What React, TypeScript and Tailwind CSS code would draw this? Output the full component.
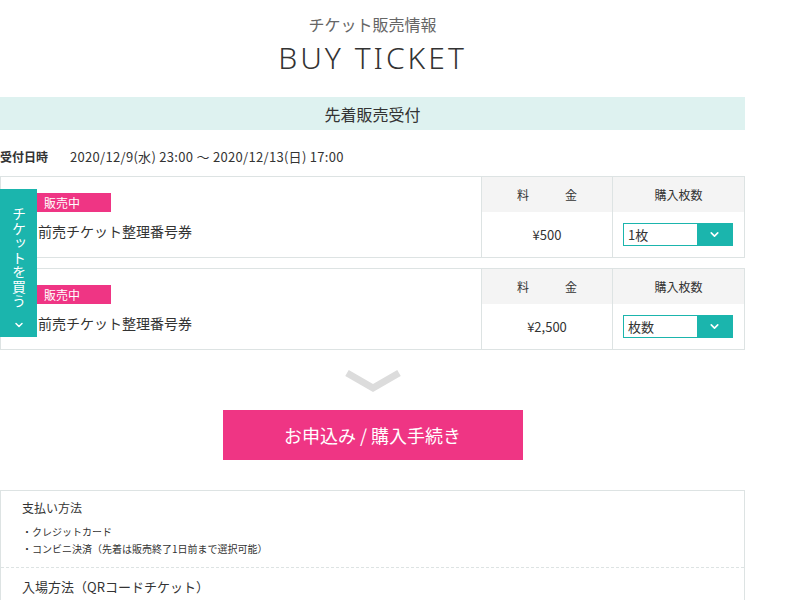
import { ChevronDown } from "lucide-react"

const jp = { fontFamily: '"Noto Sans CJK JP", "Noto Sans", sans-serif' }

const tickets = [
  { name: "前売チケット整理番号券", price: "¥500", qty: "1枚" },
  { name: "前売チケット整理番号券", price: "¥2,500", qty: "枚数" },
]

function TicketRow({ name, price, qty }: { name: string; price: string; qty: string }) {
  return (
    <div className="flex border border-[#dde3e3] h-[82px]">
      <div className="w-[481px] border-r border-[#dde3e3] pl-[23px] pt-[16px]">
        <div className="w-[87px] h-[19px] bg-[#ef3584] text-white text-[12px] leading-[19px] pl-[20px]">販売中</div>
        <div className="mt-[9px] text-[14px] leading-[20px] text-[#333]">・{name}</div>
      </div>
      <div className="w-[131px] border-r border-[#dde3e3] flex flex-col">
        <div className="h-[35px] bg-[#f4f4f4] flex items-center justify-center text-[12px] text-[#333]">
          料<span className="w-[36px]" />金
        </div>
        <div className="flex-1 flex items-center justify-center text-[13px] text-[#333]">{price}</div>
      </div>
      <div className="flex-1 flex flex-col">
        <div className="h-[35px] bg-[#f4f4f4] flex items-center justify-center text-[12px] text-[#333]">購入枚数</div>
        <div className="flex-1 flex items-center pl-[10px]">
          <div className="flex h-[23px] w-[110px] border border-[#1bb5ad]">
            <div className="flex-1 bg-white text-[13px] leading-[21px] pl-[4px] text-[#333]">{qty}</div>
            <div className="w-[35px] bg-[#1bb5ad] flex items-center justify-center">
              <ChevronDown className="w-[13px] h-[13px] text-white" strokeWidth={3} />
            </div>
          </div>
        </div>
      </div>
    </div>
  )
}

export default function App() {
  return (
    <div className="relative w-[800px] h-[600px] overflow-hidden bg-white" style={jp}>
      <div className="w-[745px]">
        <div className="pt-[14px] text-center text-[16px] leading-[20px] text-[#666]">チケット販売情報</div>
        <div className="mt-[4px] text-center text-[30px] leading-[40px] tracking-[3px] text-[#333] font-light" style={{ fontFamily: '"Noto Sans", sans-serif' }}>
          BUY TICKET
        </div>
        <div className="mt-[19px] h-[33px] bg-[#def2f0] flex items-center justify-center text-[16px] text-[#333]">先着販売受付</div>
        <div className="mt-[18px] flex items-center text-[12px] leading-[18px] text-[#333]">
          <span className="font-bold w-[70px]">受付日時</span>
          <span className="text-[13px] tracking-[0.3px]">2020/12/9(水) 23:00 ～ 2020/12/13(日) 17:00</span>
        </div>
        <div className="mt-[10px] flex flex-col gap-[10px]">
          {tickets.map((t, i) => (
            <TicketRow key={i} {...t} />
          ))}
        </div>
        <div className="mt-[19px] flex justify-center">
          <svg width="56" height="24" viewBox="0 0 56 24">
            <path d="M2 4 L28 19 L54 4" fill="none" stroke="#dcdcdc" strokeWidth="7" />
          </svg>
        </div>
        <div className="mt-[17px] flex justify-center">
          <button className="w-[300px] h-[50px] bg-[#ef3584] text-white text-[18px]">お申込み / 購入手続き</button>
        </div>
        <div className="mt-[30px] border border-[#dde3e3] text-[#333]">
          <div className="px-[21px] pt-[8px] pb-[10px]">
            <div className="text-[12px] leading-[18px]">支払い方法</div>
            <div className="mt-[6px] text-[10px] leading-[17px]">
              <div>・クレジットカード</div>
              <div>・コンビニ決済（先着は販売終了1日前まで選択可能）</div>
            </div>
          </div>
          <div className="border-t border-dashed border-[#dde3e3] px-[21px] pt-[10px] pb-[10px] text-[13px] leading-[18px]">入場方法（QRコードチケット）</div>
        </div>
      </div>
      <div className="absolute left-0 top-[189px] w-[37px] h-[148px] bg-[#1bb5ad] flex flex-col items-center pt-[18px] text-white">
        <div className="text-[14px] leading-[15px] tracking-[0.5px]" style={{ writingMode: "vertical-rl" }}>チケットを買う</div>
        <ChevronDown className="mt-[10px] w-[12px] h-[12px]" strokeWidth={3} />
      </div>
    </div>
  )
}
